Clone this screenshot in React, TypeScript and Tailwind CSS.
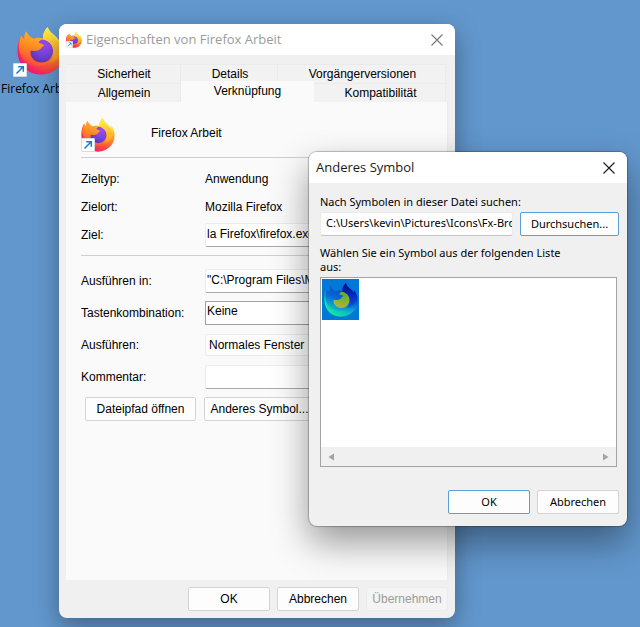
import { useId, useState, type ReactNode } from "react";
import clsx from "clsx";

interface IPalette {
  flame: string[];
  globe: string[];
  head: string[];
  glow: string[];
}

const original: IPalette = {
  flame: ["#fff44f", "#ffd030", "#ff9420", "#ff4a40", "#ec1474"],
  globe: ["#a24be8", "#7a45e0", "#5238b8"],
  head: ["#ffb02e", "#ff8a1e", "#ff6a2c"],
  glow: ["#fff04a", "#ffb52c"],
};

const selected: IPalette = {
  flame: ["#0414a8", "#0828c8", "#0c62d8", "#0cbcc4", "#14e89c"],
  globe: ["#5cae34", "#8cb42c", "#b4b03c"],
  head: ["#0850cc", "#0868d8", "#0a94d4"],
  glow: ["#040c94", "#0838cc"],
};

const ui = "font-['Liberation_Sans',Arial,sans-serif]";
const segoe = "font-['Open_Sans','Noto_Sans',sans-serif]";
const tahoma = "font-['Noto_Sans','Open_Sans',sans-serif]";

function FirefoxLogo({ palette = original, className }: { palette?: IPalette; className?: string }) {
  const id = useId();

  return (
    <svg viewBox="0 0 100 100" className={className} aria-hidden="true">
      <defs>
        <radialGradient id={`${id}f`} gradientUnits="userSpaceOnUse" cx="84" cy="14" r="98">
          <stop offset="0.08" stopColor={palette.flame[0]} />
          <stop offset="0.28" stopColor={palette.flame[1]} />
          <stop offset="0.5" stopColor={palette.flame[2]} />
          <stop offset="0.75" stopColor={palette.flame[3]} />
          <stop offset="1" stopColor={palette.flame[4]} />
        </radialGradient>
        <radialGradient id={`${id}g`} gradientUnits="userSpaceOnUse" cx="60" cy="36" r="42">
          <stop offset="0" stopColor={palette.globe[0]} />
          <stop offset="0.5" stopColor={palette.globe[1]} />
          <stop offset="1" stopColor={palette.globe[2]} />
        </radialGradient>
        <linearGradient id={`${id}h`} gradientUnits="userSpaceOnUse" x1="40" y1="18" x2="16" y2="80">
          <stop offset="0" stopColor={palette.head[0]} />
          <stop offset="0.4" stopColor={palette.head[1]} />
          <stop offset="0.65" stopColor={palette.head[2]} />
          <stop offset="1" stopColor={palette.head[2]} stopOpacity="0" />
        </linearGradient>
        <linearGradient id={`${id}y`} gradientUnits="userSpaceOnUse" x1="68" y1="4" x2="78" y2="80">
          <stop offset="0" stopColor={palette.glow[0]} />
          <stop offset="0.6" stopColor={palette.glow[1]} />
          <stop offset="1" stopColor={palette.glow[1]} stopOpacity="0" />
        </linearGradient>
      </defs>
      <path
        d="M64 0C57 7 53 15 54 24C47 22 40 22 34 25C28 22 22 16 19 9C16 14 15 19 15 25C12 23 10 20 9 17C3 26 1 38 1 50C1 78 22 99 50 99C78 99 99 78 99 51C99 38 94 27 87 20C88 24 88 27 88 29C82 17 69 14 64 0Z"
        fill={`url(#${id}f)`}
      />
      <circle cx="51" cy="50" r="24" fill={`url(#${id}g)`} />
      <path
        d="M64 0C57 7 53 16 55 26C70 30 78 41 77 55C76 64 71 71 64 76C81 73 91 63 92 50C93 28 70 20 64 0Z"
        fill={`url(#${id}y)`}
      />
      <path
        d="M19 9C16 14 15 19 15 25C12 23 10 20 9 17C4 28 2 40 6 53C10 69 24 82 42 82C54 82 63 77 68 70C58 76 40 77 31 65C27 59 27 52 29 49C36 51 44 50 49 46C51 44 51 41 57 39C54 35 49 34 45 33C46 30 49 27 54 25C47 22 40 22 34 25C28 22 22 16 19 9Z"
        fill={`url(#${id}h)`}
      />
    </svg>
  );
}

function ShortcutIcon({ className, badge }: { className: string; badge: string }) {
  return (
    <span className={clsx("relative block shrink-0", className)}>
      <FirefoxLogo className="size-full" />
      <svg viewBox="0 0 14 14" className={clsx("absolute bottom-0", badge)} aria-hidden="true">
        <rect x="0.5" y="0.5" width="13" height="13" rx="0.5" fill="#fff" stroke="#d5dbe3" />
        <path d="M3.5 10.5L9.7 4.3M5.2 3.7H10.3V8.8" fill="none" stroke="#0f7fd0" strokeWidth="1.5" />
      </svg>
    </span>
  );
}

function CloseButton({ className }: { className?: string }) {
  return (
    <button type="button" aria-label="Schließen" className={clsx("flex w-9 items-center justify-center", className)}>
      <svg viewBox="0 0 12 12" className="size-3" fill="none" stroke="currentColor" strokeWidth="1.1">
        <path d="M0.5 0.5L11.5 11.5M11.5 0.5L0.5 11.5" />
      </svg>
    </button>
  );
}

function Button({ children, primary, disabled, className }: { children: ReactNode; primary?: boolean; disabled?: boolean; className?: string }) {
  return (
    <button
      type="button"
      disabled={disabled}
      className={clsx(
        "h-6 whitespace-nowrap rounded-[2px] border text-center",
        primary ? "border-[#5b9fdc]" : disabled ? "border-[#ececec]" : "border-[#d4d4d4]",
        disabled ? "bg-[#f4f4f4] text-[#9c9c9c]" : "bg-[#fdfdfd]",
        className
      )}
    >
      {children}
    </button>
  );
}

function Row({ label, id, children }: { label: string; id?: string; children: ReactNode }) {
  return (
    <div className="flex min-h-6 items-center">
      <label htmlFor={id} className="w-[124px] shrink-0">
        {label}
      </label>
      {children}
    </div>
  );
}

const field = "h-6 min-w-0 flex-1 rounded-[2px] border border-[#ececec] border-b-[#a8a8a8] bg-white pl-px pb-0.5";
const tab = "border-r border-t border-[#ebebeb] bg-[#f2f2f2] pl-0.5 text-center";

function PropertiesWindow() {
  const [target, setTarget] = useState("la Firefox\\firefox.exe");
  const [folder, setFolder] = useState('"C:\\Program Files\\Mozilla Firefox"');
  const [comment, setComment] = useState("");

  return (
    <section
      className={clsx(
        "absolute left-[59px] top-6 w-[396px] overflow-hidden rounded-lg bg-[#f0f0f0] text-xs text-black shadow-[0_8px_24px_rgba(0,0,0,0.35)]",
        ui
      )}
    >
      <header className={clsx("flex h-[31px] bg-white pl-[7px] text-[#9b9b9b]", segoe)}>
        <ShortcutIcon className="mr-1 size-4 self-center" badge="left-0 size-[7px]" />
        <h1 className="flex-1 text-[13px] leading-[31px]">Eigenschaften von Firefox Arbeit</h1>
        <CloseButton className="text-[#777777]" />
      </header>

      <div className="px-[7px] pb-[7px] pt-[9px]">
        <nav role="tablist" className="mr-0.5 leading-[18px]">
          <div className="grid h-[19px] grid-cols-[115px_97px_1fr]">
            <button role="tab" className={tab}>Sicherheit</button>
            <button role="tab" className={tab}>Details</button>
            <button role="tab" className={tab}>Vorgängerversionen</button>
          </div>
          <div className="grid h-[19px] grid-cols-[115px_133px_1fr]">
            <button role="tab" className={tab}>Allgemein</button>
            <button role="tab" aria-selected="true" className="-mt-0.5 bg-[#fafafa] pb-0.5 text-center">Verknüpfung</button>
            <button role="tab" className={tab}>Kompatibilität</button>
          </div>
        </nav>

        <div className="min-h-[478px] border-r border-[#ececec] bg-[#fafafa] px-[15px] pt-[14px]">
          <div className="flex h-[42px] items-start border-b border-[#cfcfcf]">
            <ShortcutIcon className="mt-0.5 h-[34px] w-[34px]" badge="left-0 size-[14px]" />
            <p className="ml-[36px] leading-[34px]">Firefox Arbeit</p>
          </div>

          <div className="flex flex-col gap-1 border-b border-[#cfcfcf] pb-2 pt-[9px]">
            <Row label="Zieltyp:">Anwendung</Row>
            <Row label="Zielort:">Mozilla Firefox</Row>
            <Row label="Ziel:" id="target">
              <input id="target" className={field} value={target} onChange={(e) => setTarget(e.target.value)} />
            </Row>
          </div>

          <div className="flex flex-col gap-2 pt-[13px]">
            <Row label="Ausführen in:" id="folder">
              <input id="folder" className={field} value={folder} onChange={(e) => setFolder(e.target.value)} />
            </Row>
            <Row label="Tastenkombination:" id="hotkey">
              <input
                id="hotkey"
                readOnly
                value="Keine"
                className="h-6 min-w-0 flex-1 border border-[#a0a0a0] bg-white pb-1 pl-px"
              />
            </Row>
            <Row label="Ausführen:" id="run">
              <select id="run" className="h-[22px] min-w-0 flex-1 appearance-none rounded-[2px] border border-[#ececec] bg-[#fdfdfd] pl-[3px]">
                <option>Normales Fenster</option>
                <option>Minimiert</option>
                <option>Maximiert</option>
              </select>
            </Row>
            <Row label="Kommentar:" id="comment">
              <input id="comment" className={field} value={comment} onChange={(e) => setComment(e.target.value)} />
            </Row>
            <div className="flex gap-2 pl-1">
              <Button className="w-[111px]">Dateipfad öffnen</Button>
              <Button className="w-[111px]">Anderes Symbol...</Button>
            </div>
          </div>
        </div>

        <footer className="mt-[7px] flex justify-end gap-[7px]">
          <Button className="w-[82px]">OK</Button>
          <Button className="w-[82px]">Abbrechen</Button>
          <Button className="w-[82px]" disabled>Übernehmen</Button>
        </footer>
      </div>
    </section>
  );
}

function ChangeIconDialog() {
  const [path, setPath] = useState("C:\\Users\\kevin\\Pictures\\Icons\\Fx-Browser.ico");

  return (
    <section
      role="dialog"
      aria-label="Anderes Symbol"
      className={clsx(
        "absolute left-[309px] top-[152px] w-[318px] rounded-lg bg-[#f0f0f0] text-[11px] text-black shadow-[0_0_1px_1px_rgba(0,0,0,0.25),0_16px_36px_rgba(0,0,0,0.4)]",
        tahoma
      )}
    >
      <header className={clsx("flex h-[31px] rounded-t-lg bg-white pl-[7px] text-[#1a1a1a]", segoe)}>
        <h2 className="flex-1 text-[13px] leading-[31px]">Anderes Symbol</h2>
        <CloseButton />
      </header>

      <div className="pb-3 pl-[11px] pr-2 pt-3">
        <label htmlFor="path" className="block leading-[14px]">
          Nach Symbolen in dieser Datei suchen:
        </label>
        <div className="mt-[3px] flex gap-[7px]">
          <div className="min-w-0 flex-1 rounded-[3px] border border-[#ebebeb] border-b-[#c4c4c4] bg-white pl-[5px]">
            <input
              id="path"
              value={path}
              onChange={(e) => setPath(e.target.value)}
              className="block h-5 w-full pb-0.5"
            />
          </div>
          <Button primary className="w-[99px]">Durchsuchen...</Button>
        </div>

        <p id="icons" className="mr-12 mt-[10px] leading-[14px]">
          Wählen Sie ein Symbol aus der folgenden Liste aus:
        </p>
        <div className="mr-0.5 mt-[3px] flex h-[190px] flex-col border border-[#a3a3a3] bg-white">
          <div role="listbox" aria-labelledby="icons" className="flex-1 p-px">
            <button type="button" role="option" aria-selected="true" className="flex h-[41px] w-[37px] items-center justify-center bg-[#0078d7]">
              <FirefoxLogo palette={selected} className="size-[34px]" />
            </button>
          </div>
          <div className="flex h-[19px] items-center justify-between bg-[#f0f0f0] px-[7px] text-[#a3a3a3]">
            <button type="button" aria-label="Nach links">
              <svg viewBox="0 0 6 8" className="h-2 w-1.5" fill="currentColor">
                <path d="M6 0.5V7.5L0.5 4Z" />
              </svg>
            </button>
            <button type="button" aria-label="Nach rechts">
              <svg viewBox="0 0 6 8" className="h-2 w-1.5" fill="currentColor">
                <path d="M0 0.5V7.5L5.5 4Z" />
              </svg>
            </button>
          </div>
        </div>

        <footer className="mt-[23px] flex justify-end gap-[7px]">
          <Button primary className="w-[82px]">OK</Button>
          <Button className="w-[82px]">Abbrechen</Button>
        </footer>
      </div>
    </section>
  );
}

export default function App() {
  return (
    <main className="relative min-h-screen overflow-hidden bg-[#6297cd]">
      <div className={clsx("absolute left-0 top-[27px] w-[82px] text-xs text-black", segoe)}>
        <ShortcutIcon className="ml-[17px] size-12" badge="-left-1 -mb-0.5 size-[14px]" />
        <p className="mt-1.5 whitespace-nowrap pl-px leading-4">Firefox Arbeit</p>
      </div>
      <PropertiesWindow />
      <ChangeIconDialog />
    </main>
  );
}
